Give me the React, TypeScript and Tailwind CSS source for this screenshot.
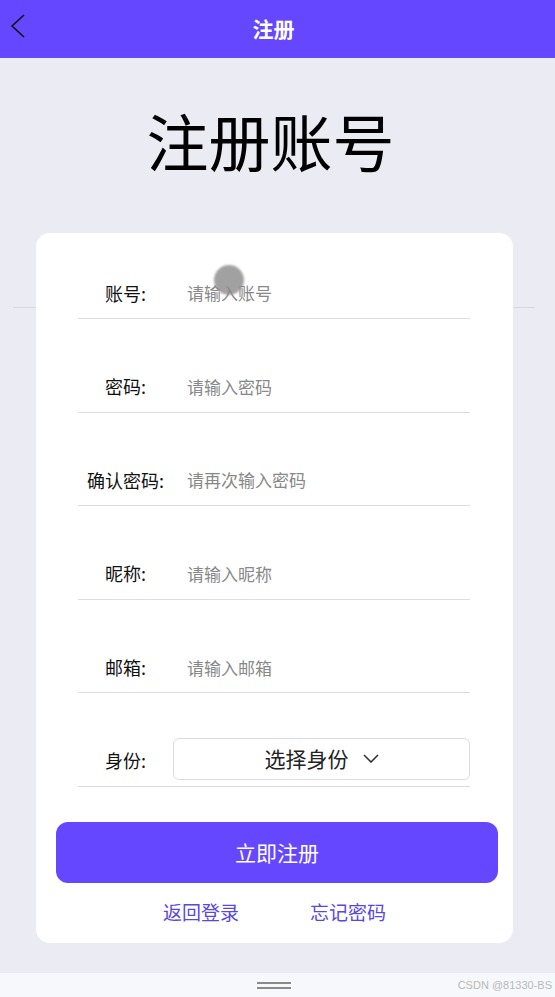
import React from "react";

const font = { fontFamily: '"Noto Sans CJK SC", "Noto Sans", sans-serif' };

const rows = [
  { label: "账号:", ph: "请输入账号" },
  { label: "密码:", ph: "请输入密码" },
  { label: "确认密码:", ph: "请再次输入密码" },
  { label: "昵称:", ph: "请输入昵称" },
  { label: "邮箱:", ph: "请输入邮箱" },
];

export default function App() {
  return (
    <div className="relative w-[555px] h-[997px] bg-[#ebebf3] flex flex-col overflow-hidden" style={font}>
      <div className="h-[58px] bg-[#6447ff] flex items-center justify-center relative shrink-0">
        <svg className="absolute left-[9px] top-[13px]" width="17" height="26" viewBox="0 0 17 26">
          <path d="M15 2 L3 13 L15 24" fill="none" stroke="#111" strokeWidth="1.6" />
        </svg>
        <span className="text-white text-[21px] font-bold mr-[8px]">注册</span>
      </div>

      <div className="h-[175px] flex items-start justify-center shrink-0 pr-[14px]">
        <div className="mt-[46px] text-[62px] leading-[72px] text-black">注册账号</div>
      </div>

      <div className="absolute left-[13px] top-[307px] w-[522px] h-px bg-[#d8d8e2]" />

      <div className="relative ml-[36px] w-[477px] h-[710px] bg-white rounded-[14px] pt-[35px] shrink-0">
        <div className="flex flex-col gap-[42.6px] pr-[43px] pl-[42px]">
          {rows.map((r) => (
            <div key={r.label} className="h-[51px] flex items-center border-b border-[#dcdce4]">
              <div className="w-[95px] text-center text-[18px] text-[#111]">{r.label}</div>
              <div className="pl-[14px] text-[17px] text-[#888]">{r.ph}</div>
            </div>
          ))}
          <div className="h-[51px] flex items-center border-b border-[#dcdce4]">
            <div className="w-[95px] text-center text-[18px] text-[#111]">身份:</div>
            <div className="flex-1 h-[42px] -mt-[4px] border border-[#dcdce4] rounded-[6px] flex items-center justify-center gap-[14px]">
              <span className="text-[21px] text-[#222]">选择身份</span>
              <svg width="16" height="9" viewBox="0 0 16 9">
                <path d="M1 1 L8 8 L15 1" fill="none" stroke="#333" strokeWidth="1.6" />
              </svg>
            </div>
          </div>
        </div>

        <div className="ml-[20px] mt-[35px] w-[442px] h-[61px] bg-[#6447ff] rounded-[12px] flex items-center justify-center text-white text-[21px]">
          立即注册
        </div>

        <div className="mt-[15px] flex justify-center gap-[71px] text-[19px] text-[#5848e0]">
          <span>返回登录</span>
          <span>忘记密码</span>
        </div>
      </div>

      <div className="absolute left-[214px] top-[265px] w-[30px] h-[30px] rounded-full bg-[#8a8a8a] opacity-80 blur-[0.8px]" />

      <div className="flex-1" />
      <div className="h-[24px] bg-[#f7f8fc] relative flex items-center justify-center shrink-0">
        <div className="flex flex-col gap-[3px] -ml-[8px]">
          <div className="w-[34px] h-[2px] bg-[#8a8a8a]" />
          <div className="w-[34px] h-[2px] bg-[#8a8a8a]" />
        </div>
        <span className="absolute right-[3px] top-[5px] text-[11px] leading-[14px] text-[#b8b8b8]" style={{ fontFamily: '"Liberation Sans", sans-serif' }}>
          CSDN @81330-BS
        </span>
      </div>
    </div>
  );
}
